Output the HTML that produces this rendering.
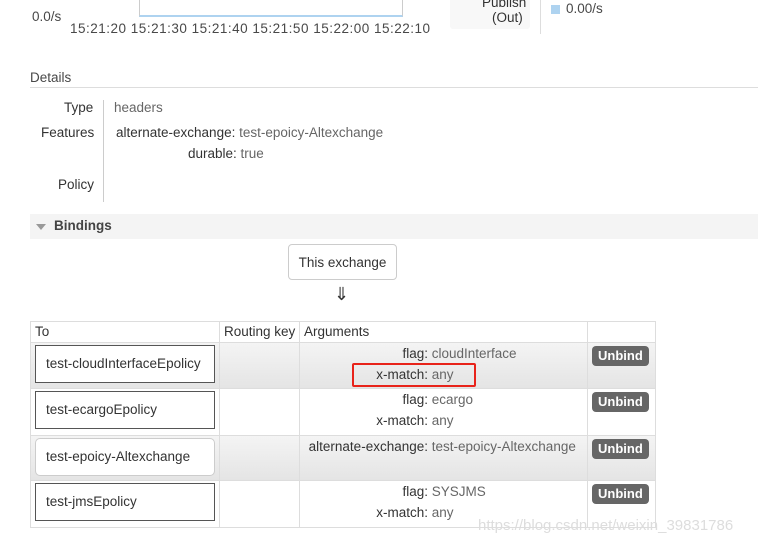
<!DOCTYPE html>
<html><head><style>
body{margin:0;width:758px;height:545px;background:#fff;font-family:"Liberation Sans",sans-serif;font-size:13.5px;color:#484848;position:relative;overflow:hidden}
.a{position:absolute;white-space:nowrap}
.k{color:#333}
.v{color:#666}
table{position:absolute;left:30px;top:321px;border-collapse:collapse;font-size:13.5px;table-layout:fixed}
td,th{border:1px solid #ddd;padding:0;vertical-align:top}
th{font-weight:normal;text-align:left;height:20px;padding-left:4px;color:#333;line-height:20px}
.g{background:linear-gradient(#f4f4f4,#e4e4e4)}
.box{margin:2px 4px;height:36px;border:1px solid #555;background:#fff;line-height:36px;padding-left:10px;color:#333;white-space:nowrap}
.args{line-height:21px;padding-top:0px;white-space:nowrap}
.args .k{display:inline-block;width:128px;text-align:right}
.btn{display:inline-block;margin:3px 0 0 4px;background:#666;color:#fff;font-weight:bold;border-radius:4px;padding:1px 6px;font-size:13px;line-height:18px}
</style></head><body>
<div class="a" style="left:139px;top:-2px;width:262px;height:17px;border:1px solid #ccc;border-top:none;border-bottom:2px solid #aed3f0"></div>
<div class="a" style="left:32px;top:9px">0.0/s</div>
<div class="a" style="left:70px;top:21px;letter-spacing:0.5px">15:21:20 15:21:30 15:21:40 15:21:50 15:22:00 15:22:10</div>
<div class="a" style="left:450px;top:-6px;width:80px;height:35px;background:#f8f8f8;border-radius:3px"></div>
<div class="a" style="left:482px;top:-5px;color:#333">Publish</div>
<div class="a" style="left:492px;top:10px;color:#333">(Out)</div>
<div class="a" style="left:540px;top:-2px;width:1px;height:36px;background:#ddd"></div>
<div class="a" style="left:551px;top:5px;width:9px;height:9px;background:#aed3f0"></div>
<div class="a" style="left:566px;top:1px">0.00/s</div>
<div class="a" style="left:30px;top:70px">Details</div>
<div class="a" style="left:30px;top:87px;width:728px;height:1px;background:#ddd"></div>
<div class="a" style="left:103px;top:100px;width:1px;height:102px;background:#ccc"></div>
<div class="a k" style="left:64px;top:100px">Type</div>
<div class="a v" style="left:114px;top:100px">headers</div>
<div class="a k" style="left:41px;top:125px">Features</div>
<div class="a k" style="left:116px;top:125px">alternate-exchange: <span class="v">test-epoicy-Altexchange</span></div>
<div class="a k" style="left:188px;top:146px">durable: <span class="v">true</span></div>
<div class="a k" style="left:58px;top:177px">Policy</div>
<div class="a" style="left:30px;top:214px;width:728px;height:25px;background:#f4f4f4"></div>
<div class="a" style="left:36px;top:224px;width:0;height:0;border-left:5px solid transparent;border-right:5px solid transparent;border-top:6px solid #999"></div>
<div class="a" style="left:54px;top:218px;font-weight:bold;color:#444">Bindings</div>
<div class="a" style="left:288px;top:244px;width:107px;height:34px;border:1px solid #ccc;border-radius:4px;line-height:35px;text-align:center;color:#333">This exchange</div>
<div class="a" style="left:334px;top:284px;font-size:18px;color:#333">⇓</div>
<table>
<colgroup><col style="width:189px"><col style="width:80px"><col style="width:288px"><col style="width:68px"></colgroup>
<tr><th>To</th><th>Routing key</th><th>Arguments</th><th></th></tr>
<tr class="g" style="height:46px"><td><div class="box">test-cloudInterfaceEpolicy</div></td><td></td><td class="args"><span class="k">flag:</span> <span class="v">cloudInterface</span><br><span class="k">x-match:</span> <span class="v">any</span></td><td><span class="btn">Unbind</span></td></tr>
<tr style="height:47px"><td><div class="box">test-ecargoEpolicy</div></td><td></td><td class="args"><span class="k">flag:</span> <span class="v">ecargo</span><br><span class="k">x-match:</span> <span class="v">any</span></td><td><span class="btn">Unbind</span></td></tr>
<tr class="g" style="height:45px"><td><div class="box" style="border-color:#ccc;border-radius:5px">test-epoicy-Altexchange</div></td><td></td><td class="args"><span class="k">alternate-exchange:</span> <span class="v">test-epoicy-Altexchange</span></td><td><span class="btn">Unbind</span></td></tr>
<tr style="height:47px"><td><div class="box">test-jmsEpolicy</div></td><td></td><td class="args"><span class="k">flag:</span> <span class="v">SYSJMS</span><br><span class="k">x-match:</span> <span class="v">any</span></td><td><span class="btn">Unbind</span></td></tr>
</table>
<div class="a" style="left:352px;top:363px;width:120px;height:20px;border:2px solid #e8231a;border-radius:2px"></div>
<div class="a" style="left:478px;top:517px;color:#ddd;font-size:15px">https://blog.csdn.net/weixin_39831786</div>
</body></html>
